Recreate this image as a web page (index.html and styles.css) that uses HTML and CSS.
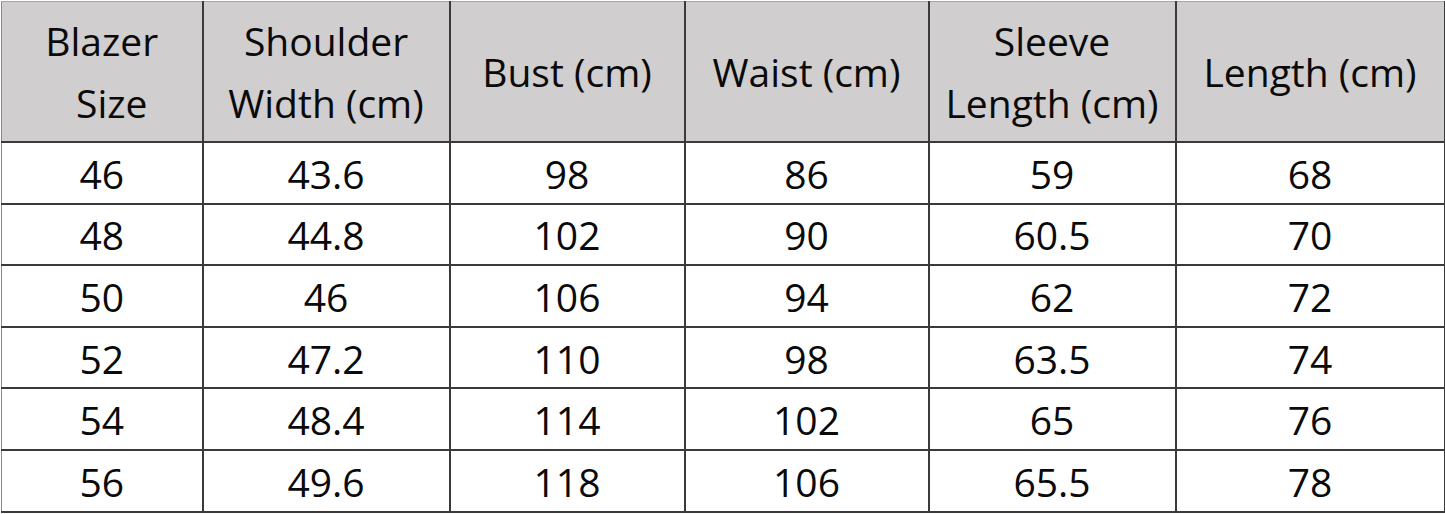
FILE: index.html
```html
<!DOCTYPE html>
<html lang="en">
<head>
<meta charset="utf-8">
<title>Blazer Size Chart</title>
<link rel="stylesheet" href="styles.css">
</head>
<body>
<table class="size-table">
  <colgroup>
    <col class="c1"><col class="c2"><col class="c3"><col class="c4"><col class="c5"><col class="c6">
  </colgroup>
  <thead>
    <tr class="head-row">
      <th>Blazer<br><span class="indent">Size</span></th>
      <th>Shoulder<br>Width (cm)</th>
      <th>Bust (cm)</th>
      <th>Waist (cm)</th>
      <th>Sleeve<br>Length (cm)</th>
      <th>Length (cm)</th>
    </tr>
  </thead>
  <tbody>
    <tr><td>46</td><td>43.6</td><td>98</td><td>86</td><td>59</td><td>68</td></tr>
    <tr><td>48</td><td>44.8</td><td>102</td><td>90</td><td>60.5</td><td>70</td></tr>
    <tr><td>50</td><td>46</td><td>106</td><td>94</td><td>62</td><td>72</td></tr>
    <tr><td>52</td><td>47.2</td><td>110</td><td>98</td><td>63.5</td><td>74</td></tr>
    <tr><td>54</td><td>48.4</td><td>114</td><td>102</td><td>65</td><td>76</td></tr>
    <tr><td>56</td><td>49.6</td><td>118</td><td>106</td><td>65.5</td><td>78</td></tr>
  </tbody>
</table>
</body>
</html>
```

FILE: styles.css
```css
html, body {
  margin: 0;
  padding: 0;
  background: #ffffff;
}

body {
  padding: 1px 0 0 1px;
  font-family: "Open Sans", "Liberation Sans", sans-serif;
  color: #0a0a0a;
}

.size-table {
  border-collapse: collapse;
  table-layout: fixed;
  width: 1443px;
}

.c1 { width: 201px; }
.c2 { width: 247px; }
.c3 { width: 235px; }
.c4 { width: 244px; }
.c5 { width: 247px; }
.c6 { width: 269px; }

.size-table th,
.size-table td {
  border: 2px solid #3a3a3a;
  padding: 0;
  text-align: center;
  font-size: 39px;
  font-weight: 400;
}

.size-table thead th {
  border-top: 1px solid #a6a6a6;
  background: #d0cece;
  height: 139px;
  line-height: 62px;
  vertical-align: middle;
}

.indent {
  padding-left: 20px;
}

.size-table th:first-child,
.size-table td:first-child {
  border-left: 1px solid #8a8a8a;
}

.size-table td {
  height: 57.6px;
  line-height: 56px;
  padding-top: 2px;
  vertical-align: middle;
}
```
